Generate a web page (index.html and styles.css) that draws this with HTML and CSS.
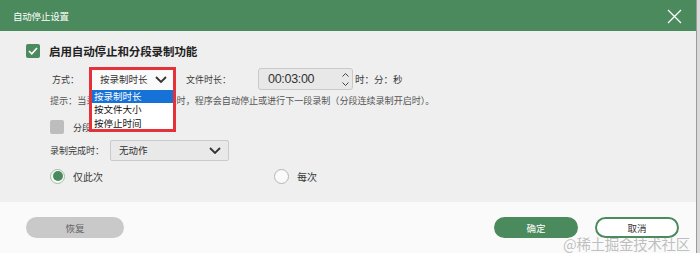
FILE: index.html
```html
<!DOCTYPE html>
<html lang="zh-CN">
<head>
  <meta charset="utf-8" />
  <title>自动停止设置</title>
  <link rel="stylesheet" href="styles.css">
</head>
<body>
  <div class="dialog">
    <!-- 标题栏 -->
    <header class="titlebar">
      <span class="title">自动停止设置</span>
      <svg class="close" width="15" height="15" viewBox="0 0 15 15"><path d="M1 1L14 14M14 1L1 14" stroke="#fff" stroke-width="1.3" fill="none"/></svg>
    </header>

    <main class="content">
      <div class="row row-main">
        <span class="check on">
          <svg width="10" height="8" viewBox="0 0 10 8"><polyline points="1,4 3.8,6.8 9,1" stroke="#fff" stroke-width="1.7" fill="none"/></svg>
        </span>
        <span class="main-label">启用自动停止和分段录制功能</span>
      </div>

      <div class="row row-mode">
        <span class="lbl lbl-mode">方式：</span>
        <div class="select select-mode">
          <span>按录制时长</span>
          <svg width="12" height="7" viewBox="0 0 12 7"><polyline points="1,1 6,6 11,1" stroke="#333" stroke-width="1.8" fill="none"/></svg>
          <ul class="options">
            <li class="active">按录制时长</li>
            <li>按文件大小</li>
            <li>按停止时间</li>
          </ul>
          <div class="mark"></div>
        </div>
        <span class="lbl lbl-len">文件时长：</span>
        <div class="time-box">
          <span class="time">00:03:00</span>
          <span class="spin">
            <svg width="7" height="4" viewBox="0 0 7 4"><polyline points="0.5,3.5 3.5,0.5 6.5,3.5" stroke="#444" stroke-width="1" fill="none"/></svg>
            <svg width="7" height="4" viewBox="0 0 7 4"><polyline points="0.5,0.5 3.5,3.5 6.5,0.5" stroke="#444" stroke-width="1" fill="none"/></svg>
          </span>
        </div>
        <span class="lbl unit">时：分：秒</span>
      </div>

      <div class="row row-hint">
        <span class="hint">提示：当录制时长达到设定时长时，程序会自动停止或进行下一段录制（分段连续录制开启时）。</span>
      </div>

      <div class="row row-split">
        <span class="check off"></span>
        <span class="lbl">分段连续录制</span>
      </div>

      <div class="row row-done">
        <span class="lbl">录制完成时：</span>
        <div class="select select-done">
          <span>无动作</span>
          <svg width="12" height="7" viewBox="0 0 12 7"><polyline points="1,1 6,6 11,1" stroke="#333" stroke-width="1.8" fill="none"/></svg>
        </div>
      </div>

      <div class="row row-radio">
        <label class="radio-item first"><span class="radio on"></span><span class="lbl">仅此次</span></label>
        <label class="radio-item"><span class="radio"></span><span class="lbl">每次</span></label>
      </div>
    </main>

    <footer class="footer">
      <button class="btn btn-reset">恢复</button>
      <div class="footer-right">
        <button class="btn btn-ok">确定</button>
        <button class="btn btn-cancel">取消</button>
      </div>
      <span class="watermark">@稀土掘金技术社区</span>
    </footer>
  </div>
</body>
</html>
```

FILE: styles.css
```css
:root{
  --green:#4a8a5c;
  --bg:#efefef;
  --text:#333;
  --red:#e5323a;
  --blue:#1672d6;
}

*{box-sizing:border-box;margin:0;padding:0}
body{
  width:700px;height:253px;overflow:hidden;
  background:#d9d9d9;
  font-family:"Noto Sans CJK SC","Microsoft YaHei",sans-serif;
  color:var(--text);
}

.dialog{width:697px;height:253px;display:flex;flex-direction:column;border-right:1px solid #9a9a9a;background:var(--bg)}

/* —— 标题栏 —— */
.titlebar{height:31px;background:var(--green);display:flex;align-items:center;justify-content:space-between;padding:0 14px 0 13px;flex-shrink:0}
.title{color:#fff;font-size:9.5px;letter-spacing:-0.2px}
.close{margin-top:1px}

/* —— 内容 —— */
.content{height:171px;padding:13px 0 0 26px;flex-shrink:0}
.row{display:flex;align-items:center}
.lbl{font-size:9px;color:#3a3a3a;white-space:nowrap}

.row-main{height:14px}
.check{width:14px;height:14px;border-radius:2px;display:flex;align-items:center;justify-content:center;flex-shrink:0}
.check.on{background:var(--green)}
.check.off{background:#bdbdbd}
.main-label{margin-left:9px;font-size:11.5px;font-weight:700;color:#222;letter-spacing:-0.1px}

.row-mode{height:22px;margin-top:10px;padding-left:26px}
.lbl-mode{width:40px}
.select{position:relative;display:flex;align-items:center;justify-content:space-between;font-size:9.5px;color:#333}
.select-mode{width:81px;height:19px;background:#fafafa;padding:0 6px 0 8px}
.options{position:absolute;left:0;top:19px;width:81px;list-style:none;background:#fff;padding-top:1px}
.options li{height:13.5px;line-height:13.5px;padding-left:2px;font-size:9.5px;color:#111}
.options li.active{background:var(--blue);color:#fff}
.mark{position:absolute;left:-3px;top:-3px;width:87px;height:65px;border:3px solid var(--red)}

.lbl-len{margin-left:13px;width:72px}
.time-box{width:95px;height:22px;background:#e8e8e8;border:1px solid #c9c9c9;border-radius:3px;display:flex;align-items:center;justify-content:space-between;padding:0 3px 0 9px}
.time{font-family:"Liberation Sans",Arial,sans-serif;font-size:12.5px;color:#333;letter-spacing:-0.3px}
.spin{display:flex;flex-direction:column;gap:5px}
.unit{margin-left:2px;font-size:9.5px}

.row-hint{height:12px;margin-top:4px;padding-left:24px}
.hint{font-size:9.1px;color:#555;white-space:nowrap;letter-spacing:-0.05px}

.row-split{height:14px;margin-top:14px;padding-left:24px}
.row-split .lbl{margin-left:9px}

.row-done{height:22px;margin-top:5px;padding-left:24px}
.row-done .lbl{width:60px}
.select-done{width:119px;height:21px;background:#e9e9e9;border:1px solid #cacaca;border-radius:2px;padding:0 7px 0 8px}

.row-radio{height:16px;margin-top:7px;padding-left:24px}
.radio-item{display:flex;align-items:center;gap:8px}
.radio-item.first{width:224px}
.radio{width:15px;height:15px;border-radius:50%;border:1px solid #b5b5b5;background:#fafafa;display:flex;align-items:center;justify-content:center}
.radio.on{border-color:#9cbfa6}
.radio.on::after{content:"";width:10px;height:10px;border-radius:50%;background:var(--green)}
.radio-item .lbl{font-size:10px}

/* —— 底部 —— */
.footer{position:relative;flex:1;background:#fafafa;display:flex;align-items:flex-start;justify-content:space-between;padding:15px 17px 0 26px}
.footer-right{display:flex;gap:17px}
.btn{height:21px;border-radius:11px;font-family:inherit;font-size:9.5px;border:none;cursor:pointer}
.btn-reset{width:98px;background:#c9c9c9;color:#666}
.btn-ok{width:84px;background:var(--green);color:#fff}
.btn-cancel{width:84px;background:#fff;border:2px solid var(--green);color:#333}
.watermark{position:absolute;right:6px;top:31px;font-size:14.5px;color:rgba(140,140,140,.55);letter-spacing:-0.3px;white-space:nowrap}
```
